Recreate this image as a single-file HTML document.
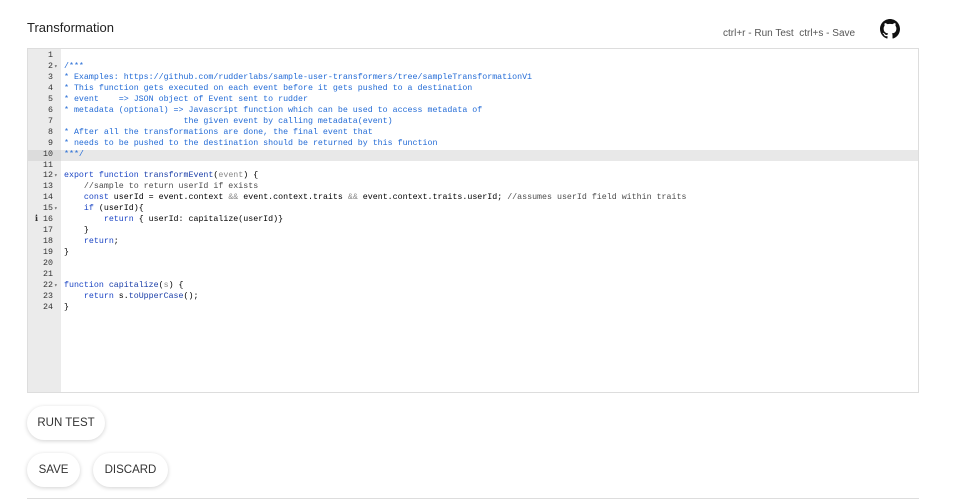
<!DOCTYPE html>
<html><head><meta charset="utf-8"><style>
*{margin:0;padding:0;box-sizing:border-box}
body{width:960px;height:501px;background:#fff;font-family:"Liberation Sans",sans-serif;position:relative;overflow:hidden;color:#222}
.title{position:absolute;left:27px;top:20px;font-size:13px;color:#222}
.keys{position:absolute;left:723px;top:28px;font-size:10px;color:#555}
.gh{position:absolute;left:880px;top:19px}
.ed{position:absolute;left:27px;top:48px;width:892px;height:345px;border:1px solid #ddd;background:#fff}
.gut{position:absolute;left:0;top:0;width:33px;height:100%;background:#ebebeb}
.code{position:absolute;left:0;top:2px;width:100%;font-family:"Liberation Mono",monospace;font-size:8.3px}
.l{height:10.96px;line-height:10.96px;white-space:pre;position:relative}
.n{position:absolute;left:0;width:25px;text-align:right;color:#333}
.f{position:absolute;left:26px;color:#666;font-size:6px}
.t{position:absolute;left:36px;color:#000}
.hl{background:#e8e8e8}
.hl .n{background:#dcdcdc;width:33px;padding-right:8px}
.c{color:#236bd6}
.k{color:#1b45c4}
.fn{color:#1a3ea8}
.p{color:#888}
.cm{color:#4d4d4d}
.btn{position:absolute;height:34px;border-radius:17px;background:#fff;box-shadow:0 1px 4px rgba(0,0,0,.18);font-size:11.5px;color:#333;display:flex;align-items:center;justify-content:center}
.hr{position:absolute;left:27px;top:498px;width:892px;height:1px;background:#ddd}
</style></head><body>
<div class="title">Transformation</div>
<div class="keys">ctrl+r - Run Test &nbsp;ctrl+s - Save</div>
<svg class="gh" width="20" height="20" viewBox="0 0 16 16"><path fill="#111" d="M8 0C3.580 0 0 3.580 0 8c0 3.540 2.290 6.530 5.470 7.590.4.07.55-.17.55-.38 0-.19-.01-.82-.01-1.490-2.010.37-2.530-.49-2.690-.94-.09-.23-.48-.94-.82-1.130-.28-.15-.68-.52-.01-.53.63-.01 1.080.58 1.230.82.72 1.210 1.870.87 2.330.66.07-.52.28-.87.51-1.070-1.780-.2-3.640-.89-3.640-3.950 0-.87.31-1.590.82-2.150-.08-.2-.36-1.020.08-2.120 0 0 .67-.21 2.200.82.64-.18 1.320-.27 2-.27.68 0 1.360.09 2 .27 1.530-1.040 2.200-.82 2.200-.82.44 1.100.16 1.920.08 2.120.51.56.82 1.270.82 2.150 0 3.070-1.870 3.750-3.650 3.950.29.25.54.73.54 1.480 0 1.070-.01 1.930-.01 2.200 0 .21.15.46.55.38A8.013 8.013 0 0016 8c0-4.420-3.580-8-8-8z"/></svg>
<div class="ed"><div class="gut"></div><div class="code">
<div class="l"><span class="n">1</span></div>
<div class="l"><span class="n">2</span><span class="f">▾</span><span class="t c">/***</span></div>
<div class="l"><span class="n">3</span><span class="t c">* Examples: https://github.com/rudderlabs/sample-user-transformers/tree/sampleTransformationV1</span></div>
<div class="l"><span class="n">4</span><span class="t c">* This function gets executed on each event before it gets pushed to a destination</span></div>
<div class="l"><span class="n">5</span><span class="t c">* event    => JSON object of Event sent to rudder</span></div>
<div class="l"><span class="n">6</span><span class="t c">* metadata (optional) => Javascript function which can be used to access metadata of</span></div>
<div class="l"><span class="n">7</span><span class="t c">                        the given event by calling metadata(event)</span></div>
<div class="l"><span class="n">8</span><span class="t c">* After all the transformations are done, the final event that</span></div>
<div class="l"><span class="n">9</span><span class="t c">* needs to be pushed to the destination should be returned by this function</span></div>
<div class="l hl"><span class="n">10</span><span class="t c">***/</span></div>
<div class="l"><span class="n">11</span></div>
<div class="l"><span class="n">12</span><span class="f">▾</span><span class="t"><span class="k">export function</span> <span class="fn">transformEvent</span>(<span class="p">event</span>) {</span></div>
<div class="l"><span class="n">13</span><span class="t cm">    //sample to return userId if exists</span></div>
<div class="l"><span class="n">14</span><span class="t">    <span class="k">const</span> userId = event.context <span class="p">&amp;&amp;</span> event.context.traits <span class="p">&amp;&amp;</span> event.context.traits.userId; <span class="cm">//assumes userId field within traits</span></span></div>
<div class="l"><span class="n">15</span><span class="f">▾</span><span class="t">    <span class="k">if</span> (userId){</span></div>
<div class="l"><span class="n">ℹ 16</span><span class="t">        <span class="k">return</span> { userId: capitalize(userId)}</span></div>
<div class="l"><span class="n">17</span><span class="t">    }</span></div>
<div class="l"><span class="n">18</span><span class="t">    <span class="k">return</span>;</span></div>
<div class="l"><span class="n">19</span><span class="t">}</span></div>
<div class="l"><span class="n">20</span></div>
<div class="l"><span class="n">21</span></div>
<div class="l"><span class="n">22</span><span class="f">▾</span><span class="t"><span class="k">function</span> <span class="fn">capitalize</span>(<span class="p">s</span>) {</span></div>
<div class="l"><span class="n">23</span><span class="t">    <span class="k">return</span> s.<span class="fn">toUpperCase</span>();</span></div>
<div class="l"><span class="n">24</span><span class="t">}</span></div>
</div></div>
<div class="btn" style="left:27px;top:406px;width:78px">RUN TEST</div>
<div class="btn" style="left:27px;top:453px;width:53px">SAVE</div>
<div class="btn" style="left:93px;top:453px;width:75px">DISCARD</div>
<div class="hr"></div>
</body></html>
